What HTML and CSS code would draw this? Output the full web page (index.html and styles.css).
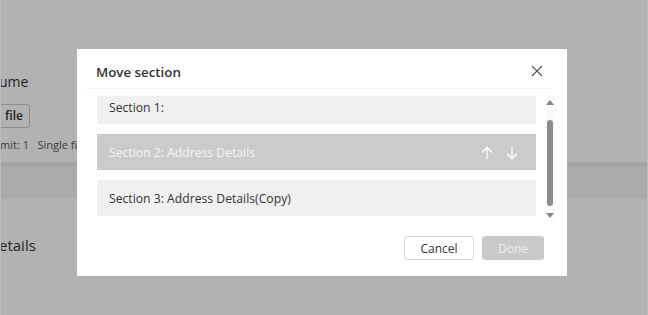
FILE: index.html
```html
<!DOCTYPE html>
<html lang="en">
<head>
    <meta charset="UTF-8">
    <meta name="viewport" content="width=device-width, initial-scale=1.0">
    <title>Move section</title>
    <link rel="stylesheet" href="styles.css">
</head>
<body>
    <div class="page">
        <div class="resume-label">ume</div>
        <div class="upload-btn">file</div>
        <div class="limit">mit: 1&nbsp;&nbsp; Single file</div>
        <div class="band"></div>
        <div class="details">etails</div>
    </div>

    <div class="overlay">
        <div class="modal">
            <div class="modal-header">
                <span class="modal-title">Move section</span>
                <svg class="close" width="12" height="12" viewBox="0 0 12 12">
                    <path d="M1 1 L11 11 M11 1 L1 11" stroke="#555" stroke-width="1.1" fill="none"/>
                </svg>
            </div>
            <div class="divider"></div>

            <div class="modal-body">
                <div class="list-view">
                    <div class="list">
                        <div class="item">Section 1:</div>
                        <div class="item selected">
                            <span>Section 2: Address Details</span>
                            <span class="arrows">
                                <svg width="12" height="14" viewBox="0 0 12 14">
                                    <path d="M6 13 V1.5 M1 6.5 L6 1.5 L11 6.5" stroke="#fff" stroke-width="1.3" fill="none"/>
                                </svg>
                                <svg width="12" height="14" viewBox="0 0 12 14">
                                    <path d="M6 1 V12.5 M1 7.5 L6 12.5 L11 7.5" stroke="#fff" stroke-width="1.3" fill="none"/>
                                </svg>
                            </span>
                        </div>
                        <div class="item">Section 3: Address Details(Copy)</div>
                    </div>
                </div>

                <div class="scrollbar">
                    <span class="scroll-up"></span>
                    <div class="track">
                        <div class="thumb"></div>
                    </div>
                    <span class="scroll-down"></span>
                </div>
            </div>

            <div class="modal-footer">
                <button class="btn btn-cancel">Cancel</button>
                <button class="btn btn-done">Done</button>
            </div>
        </div>
    </div>
</body>
</html>
```

FILE: styles.css
```css
body {
    margin: 0;
    width: 648px;
    height: 315px;
    overflow: hidden;
    background-color: white;
    font-family: "Open Sans", "Noto Sans", sans-serif;
    color: #333;
}

/* pagina por tras do modal */
.page {
    box-sizing: border-box;
    height: 315px;
    padding-top: 72px;
}

.resume-label {
    margin-left: -1px;
    font-size: 14px;
    line-height: 20px;
}

.upload-btn {
    display: inline-block;
    margin-top: 12px;
    height: 22px;
    line-height: 22px;
    padding: 0 6px 0 5px;
    border: 1px solid #ccc;
    border-left: none;
    border-radius: 0 4px 4px 0;
    font-size: 12px;
    font-weight: 600;
}

.limit {
    margin-top: 9px;
    font-size: 11px;
    line-height: 16px;
    color: #555;
}

.band {
    margin-top: 9px;
    height: 31px;
    border-top: 5px solid #ececec;
    background-color: #f4f4f4;
}

.details {
    margin-top: 35px;
    margin-left: -1px;
    font-size: 15px;
    line-height: 24px;
}

/* modal */
.overlay {
    position: absolute;
    top: 0;
    left: 0;
    width: 646px;
    height: 315px;
    background-color: rgba(0, 0, 0, 0.3);
    border-left: 1px solid #bcbcbc;
    border-right: 1px solid #bcbcbc;
}

.modal {
    position: absolute;
    top: 49px;
    left: 76px;
    width: 490px;
    height: 227px;
    background-color: white;
}

.modal-header {
    display: flex;
    justify-content: space-between;
    align-items: center;
    box-sizing: border-box;
    height: 39px;
    padding: 4px 24px 0 19px;
}

.modal-title {
    padding-top: 2px;
    font-size: 13.3px;
    font-weight: 600;
    color: #333;
}

.divider {
    height: 1px;
    margin: 0 15px 0 8px;
    background-color: #f4f4f4;
}

.modal-body {
    display: flex;
    gap: 9px;
    height: 126px;
    margin-top: 7px;
    padding-left: 20px;
}

.list-view {
    width: 439px;
    overflow: hidden;
}

.list {
    display: flex;
    flex-direction: column;
    gap: 10px;
    margin-top: -7px;
}

.item {
    display: flex;
    justify-content: space-between;
    align-items: center;
    box-sizing: border-box;
    height: 36px;
    padding: 1px 18px 0 12px;
    background-color: #f0f0f0;
    font-size: 12.2px;
    color: #333;
}

.item:first-child {
    height: 35px;
}

.item.selected {
    background-color: #cbcbcb;
    color: #f5f5f5;
}

.arrows {
    display: flex;
    gap: 13px;
}

.scrollbar {
    display: flex;
    flex-direction: column;
    align-items: center;
    width: 10px;
    background-color: #fafafa;
}

.scroll-up,
.scroll-down {
    width: 0;
    height: 0;
    margin: 4px 0;
    border-left: 4px solid transparent;
    border-right: 4px solid transparent;
}

.scroll-up {
    border-bottom: 5px solid #888;
}

.scroll-down {
    border-top: 5px solid #888;
}

.track {
    flex: 1;
    display: flex;
    flex-direction: column;
    padding: 11px 0 3px;
}

.thumb {
    width: 6px;
    flex: 1;
    border-radius: 3px;
    background-color: #8c8c8c;
}

.modal-footer {
    display: flex;
    justify-content: flex-end;
    gap: 8px;
    margin-top: 14px;
    padding-right: 23px;
}

.btn {
    height: 24px;
    border-radius: 3px;
    font-family: inherit;
    font-size: 12px;
    cursor: pointer;
}

.btn-cancel {
    width: 70px;
    border: 1px solid #d9d9d9;
    background-color: white;
    color: #333;
}

.btn-done {
    width: 62px;
    border: none;
    background-color: #cacaca;
    color: #ededed;
}
```
